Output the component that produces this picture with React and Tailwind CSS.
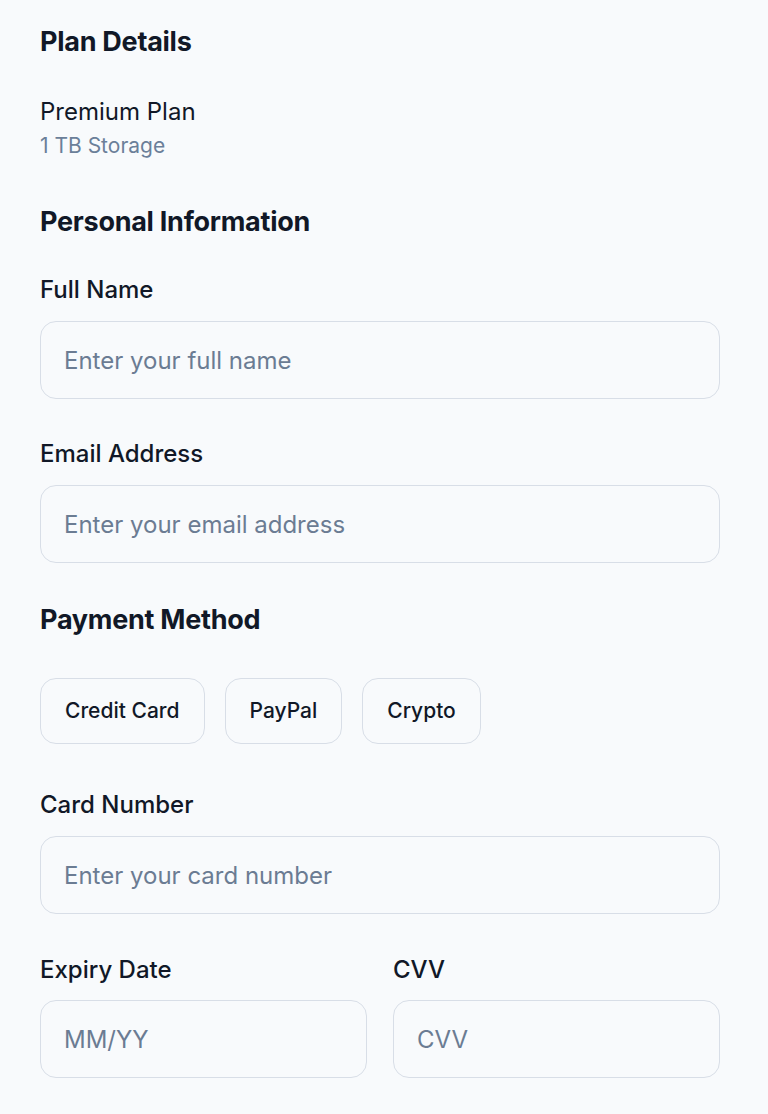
export default function App() {
  const font = { fontFamily: "Inter, 'Noto Sans', sans-serif" };
  const inputCls =
    "block w-full h-[78px] rounded-[16px] border border-[#d8dee7] bg-[#f8fafc] px-[23px] text-[24px] text-[#111827] placeholder:text-[#6b7c93] outline-none";
  const labelCls = "block text-[24px] leading-[30px] font-medium text-[#111827]";
  const headCls = "text-[27px] leading-[32px] font-bold tracking-[-0.01em] text-[#111827]";
  const btnCls =
    "h-[66px] rounded-[16px] border border-[#d8dee7] bg-[#f8fafc] px-[24px] text-[21px] font-medium text-[#111827]";
  return (
    <div className="min-h-[1114px] bg-[#f8fafc] px-[40px] pt-[26px]" style={font}>
      <div className="w-[680px]">
        <h2 className={headCls}>Plan Details</h2>
        <div className="mt-[39px] text-[24px] leading-[30px] text-[#111827]">Premium Plan</div>
        <div className="mt-[6px] text-[21px] leading-[26px] text-[#6b7f99]">1 TB Storage</div>

        <h2 className={`${headCls} mt-[47px]`}>Personal Information</h2>
        <label className={`${labelCls} mt-[37px]`}>Full Name</label>
        <input className={`${inputCls} mt-[16px]`} placeholder="Enter your full name" />
        <label className={`${labelCls} mt-[40px]`}>Email Address</label>
        <input className={`${inputCls} mt-[16px]`} placeholder="Enter your email address" />

        <h2 className={`${headCls} mt-[41px]`}>Payment Method</h2>
        <div className="mt-[42px] flex gap-[20px]">
          <button className={btnCls}>Credit Card</button>
          <button className={btnCls}>PayPal</button>
          <button className={btnCls}>Crypto</button>
        </div>

        <label className={`${labelCls} mt-[46px]`}>Card Number</label>
        <input className={`${inputCls} mt-[16px]`} placeholder="Enter your card number" />

        <div className="mt-[41px] grid grid-cols-2 gap-[26px]">
          <div>
            <label className={labelCls}>Expiry Date</label>
            <input className={`${inputCls} mt-[15px]`} placeholder="MM/YY" />
          </div>
          <div>
            <label className={labelCls}>CVV</label>
            <input className={`${inputCls} mt-[15px]`} placeholder="CVV" />
          </div>
        </div>
      </div>
    </div>
  );
}
